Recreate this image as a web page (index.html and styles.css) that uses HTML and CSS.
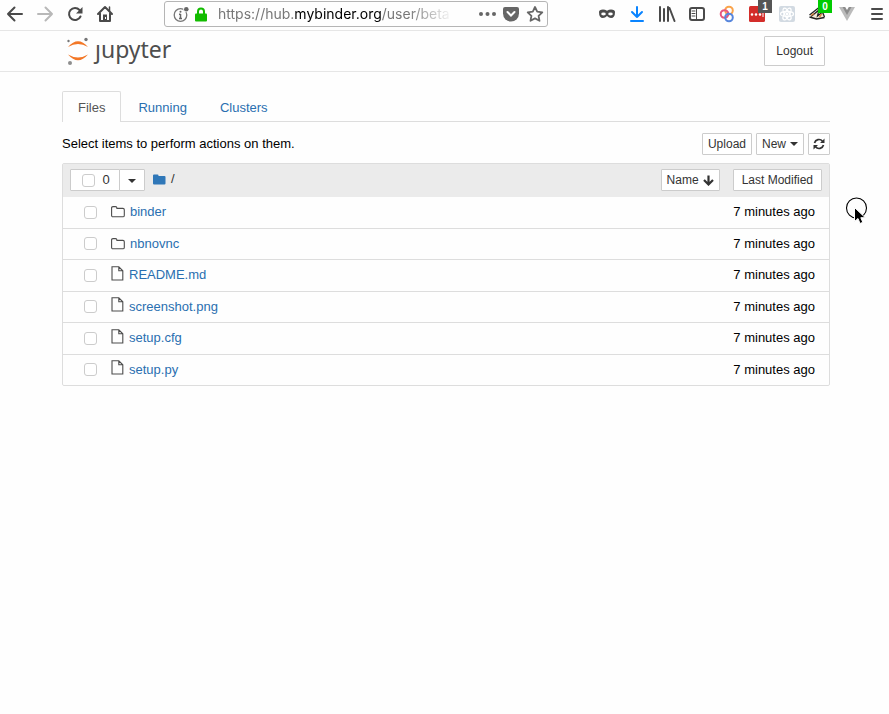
FILE: index.html
```html
<!DOCTYPE html>
<html lang="en">
<head>
<meta charset="utf-8">
<meta name="viewport" content="width=device-width, initial-scale=1">
<title>Jupyter</title>
<link rel="stylesheet" href="styles.css">
</head>
<body>
<svg class="defs" aria-hidden="true">
  <symbol id="folder" viewBox="0 0 14 12"><path d="M.6 2q0-1.400 1.400-1.400h2.500q1.400 0 1.400 1.400v.400h6q1.400 0 1.400 1.400v5.600q0 1.400-1.400 1.400H2q-1.400 0-1.400-1.400z" fill="none" stroke="#4c4c4c" stroke-width="1.1"/></symbol>
  <symbol id="file" viewBox="0 0 13 15"><path d="M1 .8h6.800l4 4v9.200H1zM7.800.800v4h4" fill="none" stroke="#4c4c4c" stroke-width="1.1"/></symbol>
</svg>
<nav class="browser" aria-label="Browser toolbar">
  <button class="tool" aria-label="Back"><svg viewBox="0 0 30 30"><path d="M22 14H8m6.500-6.500L8 14l6.500 6.500" class="line thick"/></svg></button>
  <button class="tool faded" aria-label="Forward"><svg viewBox="0 0 30 30"><path d="M8 14h14m-6.500-6.500L22 14l-6.500 6.500" class="line thick"/></svg></button>
  <button class="tool" aria-label="Reload"><svg viewBox="0 0 30 30"><path d="M20.500 16.500a6 6 0 1 1-1-6.500" class="line thick"/><path d="M22.500 7v6.500H16z" fill="currentColor"/></svg></button>
  <button class="tool" aria-label="Home"><svg viewBox="0 0 30 30"><path d="M8 14l7-7 7 7M10 13.500V21h10v-7.500" class="line thick"/><path d="M13 21v-6.500h4V21z" fill="currentColor"/><path d="M19.500 7v4" class="line"/><path d="M15 17h1v2h-1z" fill="#fff"/></svg></button>
  <div class="address">
    <svg class="site-info" viewBox="0 0 17 17" aria-hidden="true"><circle cx="7.500" cy="9" r="6.300" fill="none" stroke="#777" stroke-width="1.300"/><path d="M7.500 8v4.500M6 8.200h1.500M6 12.500h3" stroke="#666" stroke-width="1.500"/><circle cx="7.500" cy="5.800" r="1" fill="#666"/><circle cx="13.300" cy="3.200" r="3" fill="#fff"/><circle cx="13.300" cy="3.200" r="2.300" fill="#666"/></svg>
    <svg class="lock" viewBox="0 0 14 15" aria-hidden="true"><path d="M4 8V4.500a3 3 0 0 1 6 0V8" fill="none" stroke="#12bc00" stroke-width="2"/><rect x="1" y="6.500" width="12" height="8" rx="1" fill="#12bc00"/></svg>
    <span class="url">https://hub.<b>mybinder.org</b>/user/beta</span>
    <svg class="page-actions" viewBox="0 0 72 24" aria-hidden="true"><circle cx="9" cy="12" r="2" fill="#666"/><circle cx="15.500" cy="12" r="2" fill="#666"/><circle cx="22" cy="12" r="2" fill="#666"/><path d="M33 5h12q2 0 2 2v4.500a8 8 0 0 1-16 0V7q0-2 2-2z" fill="#666"/><path d="M35.500 10l3.500 3.500 3.500-3.500" fill="none" stroke="#fff" stroke-width="2" stroke-linecap="round"/><path d="M63 5l2.200 4.600 5.100.7-3.700 3.500.9 5-4.500-2.400-4.500 2.400.9-5-3.700-3.500 5.100-.7z" fill="none" stroke="#666" stroke-width="1.800" stroke-linejoin="round"/></svg>
  </div>
  <button class="tool" aria-label="Private mask"><svg viewBox="0 0 30 30"><path d="M7 12q0-2.500 4-2.500 2 0 4 1.200 2-1.200 4-1.200 4 0 4 2.500 0 6-4 6-2 0-4-2-2 2-4 2-4 0-4-6z" fill="currentColor"/><ellipse cx="11.500" cy="14" rx="2.300" ry="1.400" fill="#fff"/><ellipse cx="18.500" cy="14" rx="2.300" ry="1.400" fill="#fff"/></svg></button>
  <button class="tool download" aria-label="Downloads"><svg viewBox="0 0 30 30"><path d="M15 7v10m-5-5l5 5 5-5M9 21h12" class="line thick"/></svg></button>
  <button class="tool" aria-label="Library"><svg viewBox="0 0 30 30"><path d="M8 7v14m4-12v12m4-14v14m1.500-13l5 13" class="line thick" stroke-linecap="butt"/></svg></button>
  <button class="tool" aria-label="Sidebars"><svg viewBox="0 0 30 30"><rect x="8" y="8" width="14" height="12" rx="2" class="line thick"/><path d="M14.500 8v12M10 11h3m-3 2.500h3M10 16h3" class="line thin"/></svg></button>
  <button class="tool" aria-label="Containers"><svg viewBox="0 0 30 30" fill="none" stroke-width="2"><circle cx="17" cy="10.500" r="3.800" stroke="#faa34a"/><circle cx="12.500" cy="14" r="3.800" stroke="#e7577d"/><circle cx="17" cy="17.500" r="3.800" stroke="#5786dc"/></svg></button>
  <button class="tool" aria-label="Passwords"><svg viewBox="0 0 30 30"><rect x="7" y="6" width="16" height="16" rx="1.500" fill="#d32d2a"/><path d="M10 14.500h9" stroke="#fff" stroke-width="2.600" stroke-linecap="round" stroke-dasharray="0 4"/><path d="M21 12v5" stroke="#fff"/></svg><span class="count">1</span></button>
  <button class="tool" aria-label="React tools"><svg viewBox="0 0 30 30"><rect x="7" y="6" width="16" height="16" rx="2" fill="#d2dae2"/><g fill="none" stroke="#fff" stroke-width="1.300"><ellipse cx="15" cy="14" rx="6.500" ry="2.500"/><ellipse cx="15" cy="14" rx="6.500" ry="2.500" transform="rotate(60 15 14)"/><ellipse cx="15" cy="14" rx="6.500" ry="2.500" transform="rotate(120 15 14)"/></g><circle cx="15" cy="14" r="1.500" fill="#fff"/></svg></button>
  <button class="tool" aria-label="Script manager"><svg viewBox="0 0 30 30"><path d="M8 17.500L17 8.500l5 3.500.5 5-6 2.500z" fill="#f4ead8"/><path d="M7.500 15L17 7.500M9 16.500l8-6.500-1.500 6 5-4 2 5" fill="none" stroke="#222" stroke-width="1.300"/><path d="M7.500 17l7 2 8-1.500" fill="none" stroke="#222" stroke-width="1.600"/><path d="M9 15.500l3-2M17.500 17l2-3" stroke="#d9823b" stroke-width="1.500"/></svg><span class="count green">0</span></button>
  <button class="tool" aria-label="Vue tools"><svg viewBox="0 0 30 30"><path d="M7 7h16l-8 14z" fill="#bbb"/><path d="M10.500 7h9L15 15z" fill="#8c8c8c"/><path d="M13.200 7h3.600L15 10z" fill="#fff"/></svg></button>
  <button class="tool menu" aria-label="Menu"><svg viewBox="0 0 30 30"><path d="M10 9h10m-10 5h10m-10 5h10" class="line thick"/></svg></button>
</nav>
<header class="header">
  <a class="logo" href="#" aria-label="jupyter">
    <svg viewBox="0 0 24 28" aria-hidden="true"><path d="M2 10Q12-1.500 22 10q-10-6-20 0zM2 17.500Q12 29 22 17.500q-10 6-20 0z" fill="#f37726"/><circle cx="2.500" cy="4" r="1.200" fill="#767677"/><circle cx="20" cy="2.500" r="1.700" fill="#767677"/><circle cx="4" cy="26" r="2" fill="#8e8e8e"/></svg>
    <span>ȷupyter</span>
  </a>
  <button class="button logout">Logout</button>
</header>
<main class="content">
  <nav class="tabs" aria-label="Sections"><a class="active" href="#files">Files</a><a href="#running">Running</a><a href="#clusters">Clusters</a></nav>
  <div class="actions">
    <p>Select items to perform actions on them.</p>
    <button class="button">Upload</button>
    <button class="button">New <i class="caret"></i></button>
    <button class="button refresh" aria-label="Refresh"><svg viewBox="0 0 12 12"><path d="M1.500 5a4.600 4.600 0 0 1 8-1.800M10.500 7a4.600 4.600 0 0 1-8 1.800" fill="none" stroke="#333" stroke-width="1.700"/><path d="M11.500.5v4.500H7zM.5 11.500V7H5z" fill="#333"/></svg></button>
  </div>
  <section class="files" id="files">
    <div class="files-head">
      <div class="select-group"><label class="button"><input type="checkbox" aria-label="Select all"><span>0</span></label><button class="button" aria-label="Selection menu"><i class="caret"></i></button></div>
      <a class="crumb" href="#" aria-label="Root folder"><svg viewBox="0 0 13 11"><path d="M0 1.500Q0 .5 1 .5h3.500q1 0 1 1V2H11.500q1 0 1 1v6.500q0 1-1 1H1q-1 0-1-1z" fill="#2f77b8"/></svg></a><span class="slash">/</span>
      <button class="button sort">Name <svg viewBox="0 0 11 11"><path d="M5.500.5v9M1 5l4.500 4.500L10 5" fill="none" stroke="#333" stroke-width="2.200"/></svg></button>
      <button class="button modified">Last Modified</button>
    </div>
    <table>
      <tbody>
        <tr><td class="pick"><input type="checkbox" aria-label="Select binder"></td><td><a href="#"><svg class="folder"><use href="#folder"/></svg>binder</a></td><td class="time">7 minutes ago</td></tr>
        <tr><td class="pick"><input type="checkbox" aria-label="Select nbnovnc"></td><td><a href="#"><svg class="folder"><use href="#folder"/></svg>nbnovnc</a></td><td class="time">7 minutes ago</td></tr>
        <tr><td class="pick"><input type="checkbox" aria-label="Select README.md"></td><td><a href="#"><svg class="file"><use href="#file"/></svg>README.md</a></td><td class="time">7 minutes ago</td></tr>
        <tr><td class="pick"><input type="checkbox" aria-label="Select screenshot.png"></td><td><a href="#"><svg class="file"><use href="#file"/></svg>screenshot.png</a></td><td class="time">7 minutes ago</td></tr>
        <tr><td class="pick"><input type="checkbox" aria-label="Select setup.cfg"></td><td><a href="#"><svg class="file"><use href="#file"/></svg>setup.cfg</a></td><td class="time">7 minutes ago</td></tr>
        <tr><td class="pick"><input type="checkbox" aria-label="Select setup.py"></td><td><a href="#"><svg class="file"><use href="#file"/></svg>setup.py</a></td><td class="time">7 minutes ago</td></tr>
      </tbody>
    </table>
  </section>
</main>
<svg class="pointer" viewBox="0 0 24 28" aria-hidden="true"><circle cx="11.500" cy="11" r="10" fill="none" stroke="#000" stroke-width="1.100"/><path d="M9.500 10.500v14l3.500-3 2 5 2.800-1.200-2-4.600h4.500z" fill="#000" stroke="#fff"/></svg>
</body>
</html>
```
FILE: styles.css
```css
* { box-sizing: border-box; }
body { margin: 0; background: #fefefe; color: #000; font: 13px/20px "Liberation Sans", Arial, sans-serif; }
button, input { font: inherit; margin: 0; }
a { color: #2a6fb0; text-decoration: none; }
svg { display: block; flex: none; }
.defs { display: none; }

.browser { display: flex; height: 31px; border-bottom: 1px solid #e6e6e6; }
.tool { position: relative; flex: none; width: 30px; height: 30px; padding: 0; border: 0; background: none; color: #4a4a4a; }
.tool svg { width: 30px; height: 30px; }
.tool.faded { color: #b8b8b8; }
.tool.download { color: #0a84ff; }
.tool.menu { width: 27px; }
.line { fill: none; stroke: currentColor; stroke-width: 1.5px; stroke-linecap: round; stroke-linejoin: round; }
.line.thick { stroke-width: 2px; }
.line.thin { stroke-width: 1px; }
.count { position: absolute; top: 0; right: 0; width: 14px; height: 13px; background: #555; color: #fff; font: bold 10px/13px "Liberation Sans", Arial, sans-serif; text-align: center; }
.count.green { background: #0c0; }

.address { display: flex; flex: 1; align-items: center; min-width: 0; height: 26px; margin: 1px 44px 0; padding: 0 3px 0 8px; border: 1px solid #b5b5b5; border-radius: 3px; }
.site-info { width: 17px; height: 17px; }
.lock { width: 14px; height: 15px; margin-left: 4px; }
.url { flex: 1; min-width: 0; margin-left: 10px; overflow: hidden; white-space: nowrap; color: #777; font: 14px/20px Inter, sans-serif; -webkit-mask-image: linear-gradient(90deg, #000 190px, transparent 235px); mask-image: linear-gradient(90deg, #000 190px, transparent 235px); }
.url b { color: #000; font-weight: 400; }
.page-actions { width: 72px; height: 24px; }

.header { display: flex; align-items: center; justify-content: space-between; height: 41px; padding: 0 64px 0 66px; border-bottom: 1px solid #e6e6e6; }
.logo { display: flex; gap: 5px; color: #4e4e4e; font: 23px/24px "Noto Sans", sans-serif; }
.logo svg { width: 24px; height: 28px; }
.button { display: flex; align-items: center; justify-content: center; height: 22px; padding: 0 5px; border: 1px solid #ccc; border-radius: 1px; background: #fff; color: #333; font-size: 12px; white-space: nowrap; }
.logout { height: 30px; padding: 0 11px; }

.content { padding: 19px 59px 0 62px; }
.tabs { display: flex; height: 31px; border-bottom: 1px solid #ddd; }
.tabs a { height: 30px; margin-right: 1px; padding: 7px 16px 3px; }
.tabs .active { height: 31px; padding: 6px 15px 4px; border: 1px solid #ddd; border-bottom: 0; border-radius: 2px 2px 0 0; background: #fefefe; color: #555; }
.actions { display: flex; align-items: center; gap: 4px; height: 41px; padding-top: 2px; }
.actions p { flex: 1; margin: 0; }
.caret { width: 0; margin-left: 4px; border: 4px solid transparent; border-top-color: #333; border-bottom: 0; }
.refresh { padding: 0 4px; }
.refresh svg { width: 12px; height: 12px; }

.files { border: 1px solid #ddd; border-radius: 2px; }
.files-head { display: flex; align-items: center; height: 32px; padding: 0 7px; background: #ebebeb; }
.select-group { display: flex; }
.select-group label { gap: 7px; width: 50px; padding: 0 4px 0 6px; font-size: 13px; }
.select-group button { width: 26px; margin-left: -1px; }
.select-group .caret { margin: 2px 0 0; }
.crumb { margin-left: 8px; }
.crumb svg { width: 13px; height: 11px; margin-bottom: 2px; }
.slash { margin: 0 0 2px 5px; color: #333; }
.sort { margin-left: auto; }
.sort svg { width: 11px; height: 11px; margin-left: 4px; }
.modified { margin-left: 13px; padding: 0 8px; }
input[type="checkbox"] { appearance: none; display: block; width: 13px; height: 13px; border: 1px solid #ccc; border-radius: 3px; background: #fff; }
table { width: 100%; height: 189px; border-collapse: separate; border-spacing: 0; }
td { padding: 0; border-top: 1px solid #ddd; }
tr:first-child td { border-top-color: #ebebeb; }
.pick { width: 48px; padding-left: 21px; }
td a { display: flex; align-items: center; }
.folder { width: 14px; height: 12px; margin: 0 5px 0 0; }
.file { width: 13px; height: 15px; margin: 0 5px 4px 0; }
.time { padding-right: 14px; text-align: right; }

.pointer { position: absolute; top: 197px; left: 845px; width: 24px; height: 28px; }
```
